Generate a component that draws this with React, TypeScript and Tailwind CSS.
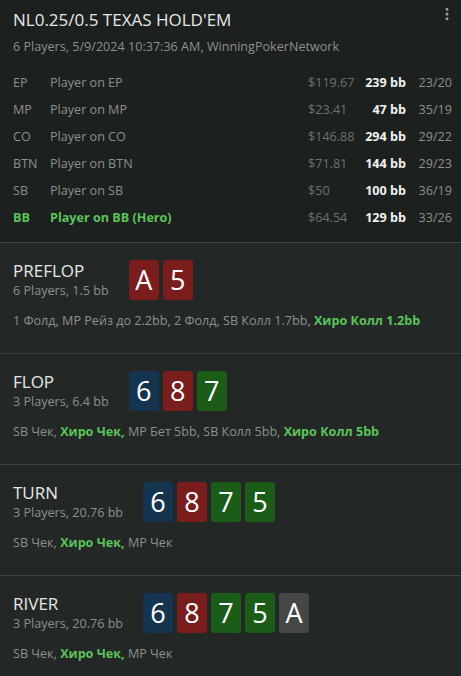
import { MoreVertical } from 'lucide-react';

type Player = { pos: string; name: string; stack: string; bb: string; stats: string; hero?: boolean };

const players: Player[] = [
  { pos: 'EP', name: 'Player on EP', stack: '$119.67', bb: '239 bb', stats: '23/20' },
  { pos: 'MP', name: 'Player on MP', stack: '$23.41', bb: '47 bb', stats: '35/19' },
  { pos: 'CO', name: 'Player on CO', stack: '$146.88', bb: '294 bb', stats: '29/22' },
  { pos: 'BTN', name: 'Player on BTN', stack: '$71.81', bb: '144 bb', stats: '29/23' },
  { pos: 'SB', name: 'Player on SB', stack: '$50', bb: '100 bb', stats: '36/19' },
  { pos: 'BB', name: 'Player on BB (Hero)', stack: '$64.54', bb: '129 bb', stats: '33/26', hero: true },
];

type Card = { rank: string; suit: 'r' | 'b' | 'g' | 'n' };

const cardBg = {
  r: 'bg-[#7a1d1d]',
  b: 'bg-[#15344f]',
  g: 'bg-[#1a5c18]',
  n: 'bg-[#454747]',
};

type Action = { text: string; hero?: boolean };

type Street = { name: string; info: string; cards: Card[]; actions: Action[] };

const streets: Street[] = [
  {
    name: 'PREFLOP',
    info: '6 Players, 1.5 bb',
    cards: [
      { rank: 'A', suit: 'r' },
      { rank: '5', suit: 'r' },
    ],
    actions: [
      { text: '1 Фолд, MP Рейз до 2.2bb, 2 Фолд, SB Колл 1.7bb, ' },
      { text: 'Хиро Колл 1.2bb', hero: true },
    ],
  },
  {
    name: 'FLOP',
    info: '3 Players, 6.4 bb',
    cards: [
      { rank: '6', suit: 'b' },
      { rank: '8', suit: 'r' },
      { rank: '7', suit: 'g' },
    ],
    actions: [
      { text: 'SB Чек, ' },
      { text: 'Хиро Чек, ', hero: true },
      { text: 'MP Бет 5bb, SB Колл 5bb, ' },
      { text: 'Хиро Колл 5bb', hero: true },
    ],
  },
  {
    name: 'TURN',
    info: '3 Players, 20.76 bb',
    cards: [
      { rank: '6', suit: 'b' },
      { rank: '8', suit: 'r' },
      { rank: '7', suit: 'g' },
      { rank: '5', suit: 'g' },
    ],
    actions: [{ text: 'SB Чек, ' }, { text: 'Хиро Чек, ', hero: true }, { text: 'MP Чек' }],
  },
  {
    name: 'RIVER',
    info: '3 Players, 20.76 bb',
    cards: [
      { rank: '6', suit: 'b' },
      { rank: '8', suit: 'r' },
      { rank: '7', suit: 'g' },
      { rank: '5', suit: 'g' },
      { rank: 'A', suit: 'n' },
    ],
    actions: [{ text: 'SB Чек, ' }, { text: 'Хиро Чек, ', hero: true }, { text: 'MP Чек' }],
  },
];

function StreetBlock({ street }: { street: Street }) {
  return (
    <div className="border-t border-[#3b403e] bg-[#232826] px-[13px] pt-[17px] pb-[21px] h-[111px]">
      <div className="flex items-center gap-5">
        <div className="flex flex-col">
          <span className="text-[17px] leading-[22px] text-[#e6e8e7]">{street.name}</span>
          <span className="text-[12.6px] leading-[18px] text-[#8c908e]">{street.info}</span>
        </div>
        <div className="flex gap-[4px]">
          {street.cards.map((c, i) => (
            <div
              key={i}
              className={`${cardBg[c.suit]} w-[30px] h-[40px] rounded-[3px] flex items-center justify-center text-[27px] text-white`}
            >
              {c.rank}
            </div>
          ))}
        </div>
      </div>
      <p className="mt-[12px] text-[12.6px] leading-[18px] text-[#8c908e] whitespace-nowrap">
        {street.actions.map((a, i) => (
          <span key={i} className={a.hero ? 'font-bold text-[#5cc35a]' : ''}>
            {a.text}
          </span>
        ))}
      </p>
    </div>
  );
}

export default function App() {
  return (
    <div className="w-[461px] h-[676px] overflow-hidden bg-[#232826] font-['Open_Sans',sans-serif]">
      <div className="relative bg-[#1c201e] pl-[13px] pr-[9px] pt-[8px] h-[242px]">
        <button className="absolute right-[6px] top-[6px] text-[#9aa09d]">
          <MoreVertical className="w-4 h-4" strokeWidth={2.5} />
        </button>
        <h1 className="text-[17px] leading-[24px] text-[#e6e8e7]">NL0.25/0.5 TEXAS HOLD'EM</h1>
        <p className="mt-[6px] text-[12.6px] leading-[18px] text-[#8c908e]">
          6 Players, 5/9/2024 10:37:36 AM, WinningPokerNetwork
        </p>
        <div className="mt-[14px] flex flex-col">
          {players.map((p) => {
            const tone = p.hero ? 'font-bold text-[#5cc35a]' : 'text-[#8c908e]';
            return (
              <div key={p.pos} className="flex items-center h-[27px] text-[12.6px] whitespace-nowrap">
                <span className={`w-[37px] ${tone}`}>{p.pos}</span>
                <span className={`flex-1 ${tone}`}>{p.name}</span>
                <span className="w-[48px] text-[#6d7270]">{p.stack}</span>
                <span className="w-[50px] text-right font-bold text-[#f2f2f2]">{p.bb}</span>
                <span className="w-[46px] text-right text-[#8c908e]">{p.stats}</span>
              </div>
            );
          })}
        </div>
      </div>
      {streets.map((s) => (
        <StreetBlock key={s.name} street={s} />
      ))}
    </div>
  );
}
